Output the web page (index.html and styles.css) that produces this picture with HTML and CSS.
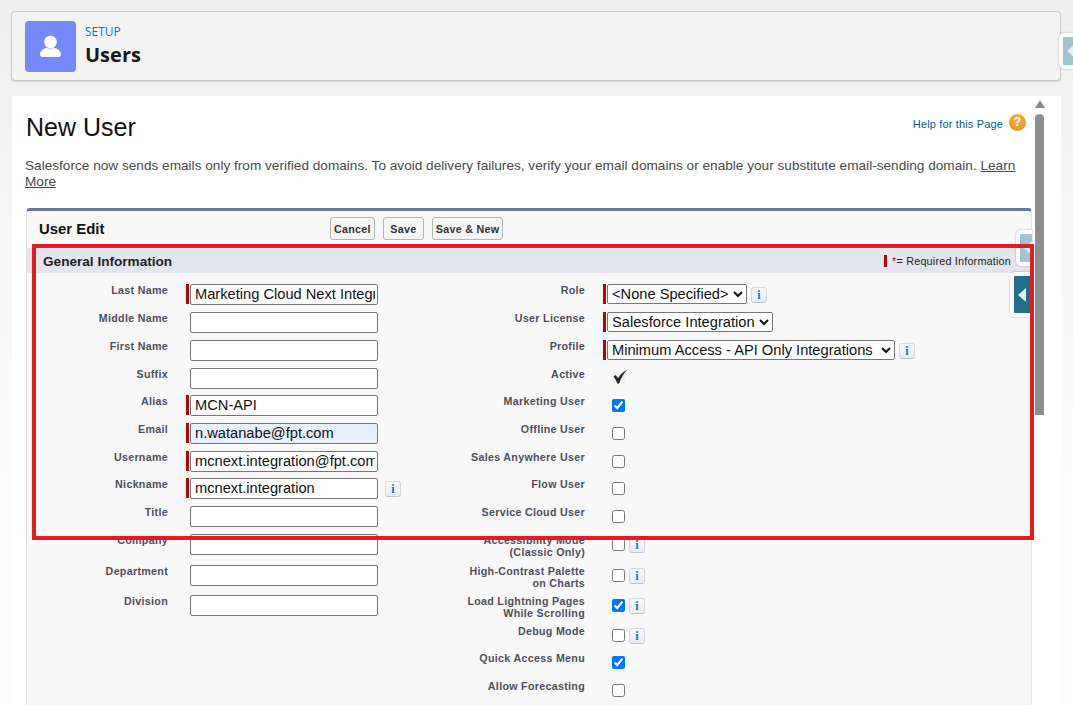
FILE: index.html
```html
<!DOCTYPE html>
<html lang="en">
<head>
  <meta charset="UTF-8">
  <title>Users | New User</title>
  <link rel="stylesheet" href="styles.css">
</head>
<body>
  <div class="page-head">
    <div class="head-icon">
      <svg width="51" height="51" viewBox="0 0 51 51"><circle cx="25.5" cy="21" r="6.3" fill="#fff"/><path d="M15 33.5c0-4 4.500-6.500 7-6.800 1.800 1.200 4.800 1.200 6.800 0 2.700.3 7.200 2.800 7.200 6.800 0 1.600-1 2.500-2.500 2.500h-16c-1.500 0-2.500-.9-2.500-2.500z" fill="#fff"/></svg>
    </div>
    <div>
      <div class="head-kicker">SETUP</div>
      <div class="head-title">Users</div>
    </div>
  </div>

  <div class="content">
    <div class="title-row">
      <h1>New User</h1>
      <div class="help">
        <a href="#">Help for this Page</a>
        <span class="help-icon">?</span>
      </div>
    </div>
    <p class="notice">Salesforce now sends emails only from verified domains. To avoid delivery failures, verify your email domains or enable your substitute email-sending domain. <a href="#">Learn</a> <a href="#">More</a></p>

    <div class="panel">
      <div class="panel-head">
        <div class="panel-title">User Edit</div>
        <div class="buttons">
          <button>Cancel</button>
          <button>Save</button>
          <button>Save &amp; New</button>
        </div>
      </div>
      <div class="section-head">
        <span>General Information</span>
        <span class="required-note"><i class="red-bar"></i><em>*</em>= Required Information</span>
      </div>
      <div class="form">
        <label>Last Name</label>
        <div class="ctl req"><input type="text" value="Marketing Cloud Next Integration"></div>
        <label>Role</label>
        <div class="ctl req"><select><option>&lt;None Specified&gt;</option></select><span class="info">i</span></div>

        <label>Middle Name</label>
        <div class="ctl"><input type="text"></div>
        <label>User License</label>
        <div class="ctl req"><select><option>Salesforce Integration</option></select></div>

        <label>First Name</label>
        <div class="ctl"><input type="text"></div>
        <label>Profile</label>
        <div class="ctl req"><select class="wide"><option>Minimum Access - API Only Integrations</option></select><span class="info">i</span></div>

        <label>Suffix</label>
        <div class="ctl"><input type="text"></div>
        <label>Active</label>
        <div class="ctl"><svg class="tick" width="16" height="15" viewBox="0 0 16 15"><rect x="1" y="2" width="12" height="12" fill="#efefef"/><path d="M1.500 7.500 3.500 6l2.700 3.300C8 6 11 2.800 15.500.5 12 4 9.300 8.500 7 14.500H5.200C4.500 11.500 3 9.500 1.500 7.500z" fill="#222"/></svg></div>

        <label>Alias</label>
        <div class="ctl req"><input type="text" value="MCN-API"></div>
        <label>Marketing User</label>
        <div class="ctl"><input type="checkbox" checked></div>

        <label>Email</label>
        <div class="ctl req"><input class="autofilled" type="text" value="n.watanabe@fpt.com"></div>
        <label>Offline User</label>
        <div class="ctl"><input type="checkbox"></div>

        <label>Username</label>
        <div class="ctl req"><input type="text" value="mcnext.integration@fpt.com"></div>
        <label>Sales Anywhere User</label>
        <div class="ctl"><input type="checkbox"></div>

        <label>Nickname</label>
        <div class="ctl req"><input type="text" value="mcnext.integration"><span class="info">i</span></div>
        <label>Flow User</label>
        <div class="ctl"><input type="checkbox"></div>

        <label>Title</label>
        <div class="ctl"><input type="text"></div>
        <label>Service Cloud User</label>
        <div class="ctl"><input type="checkbox"></div>

        <label>Company</label>
        <div class="ctl"><input type="text"></div>
        <label>Accessibility Mode<br>(Classic Only)</label>
        <div class="ctl"><input type="checkbox"><span class="info">i</span></div>

        <label>Department</label>
        <div class="ctl"><input type="text"></div>
        <label>High-Contrast Palette<br>on Charts</label>
        <div class="ctl"><input type="checkbox"><span class="info">i</span></div>

        <label>Division</label>
        <div class="ctl"><input type="text"></div>
        <label>Load Lightning Pages<br>While Scrolling</label>
        <div class="ctl"><input type="checkbox" checked><span class="info">i</span></div>

        <div></div><div></div>
        <label>Debug Mode</label>
        <div class="ctl"><input type="checkbox"><span class="info">i</span></div>

        <div></div><div></div>
        <label>Quick Access Menu</label>
        <div class="ctl"><input type="checkbox" checked></div>

        <div></div><div></div>
        <label>Allow Forecasting</label>
        <div class="ctl"><input type="checkbox"></div>
      </div>
    </div>
  </div>

  <!-- floating things over the page -->
  <div class="side-tab tab-top"><i></i></div>
  <div class="side-tab tab-faded"><i></i></div>
  <div class="side-tab tab-dark"><i></i></div>
  <div class="scroll-arrow"></div>
  <div class="scroll-thumb"></div>
  <div class="callout"></div>
</body>
</html>
```

FILE: styles.css
```css
body {
  margin: 0;
  height: 705px;
  overflow: hidden;
  background: linear-gradient(#eeeeee, #f6f6f6 200px, #fdfdfd 500px);
  font-family: "Liberation Sans", Arial, sans-serif;
  padding: 11px 12px 0 11px;
  box-sizing: border-box;
}

.page-head {
  display: flex;
  align-items: center;
  gap: 9px;
  height: 70px;
  box-sizing: border-box;
  padding-left: 13px;
  background: #f3f3f3;
  border: 1px solid #c9c9c9;
  border-radius: 4px;
  box-shadow: 0 1px 1px rgba(0,0,0,0.12);
  font-family: "Open Sans", sans-serif;
}

.head-icon {
  width: 51px;
  height: 51px;
  border-radius: 4px;
  background: #7589fb;
}

.head-icon svg {
  display: block;
}

.head-kicker {
  font-size: 12px;
  line-height: 16px;
  color: #0b7ab5;
  margin-bottom: 2px;
}

.head-title {
  font-size: 20px;
  line-height: 26px;
  font-weight: 700;
  color: #181818;
}

.content {
  margin: 15px 0 0 1px;
  height: 620px;
  background: #fff;
  padding: 0 14px;
}

.title-row {
  display: flex;
  justify-content: space-between;
  height: 58px;
}

h1 {
  margin: 17px 0 0;
  font-size: 25px;
  line-height: 28px;
  font-weight: 400;
  color: #111;
}

.help {
  display: flex;
  align-items: center;
  gap: 6px;
  height: 18px;
  margin: 17px 21px 0 0;
}

.help a {
  font-size: 11px;
  line-height: 22px;
  padding-top: 4px;
  letter-spacing: 0.15px;
  color: #015ba7;
  text-decoration: none;
}

.help-icon {
  width: 17px;
  height: 17px;
  border-radius: 50%;
  background: radial-gradient(circle at 50% 35%, #f6b54a, #e08a12);
  color: #fff;
  font-size: 12px;
  font-weight: 700;
  line-height: 17px;
  text-align: center;
}

.notice {
  margin: 4px 0 0 -1px;
  font-size: 13.63px;
  line-height: 16px;
  color: #4a4a4a;
  width: 1000px;
}

.notice a {
  color: #4a4a4a;
}

.panel {
  margin-top: 18px;
  height: 520px;
  width: 1006px;
  box-sizing: border-box;
  background: #f8f8f8;
  border: 1px solid #e2e4e7;
  border-top: 3px solid #6c7896;
  border-radius: 4px 4px 0 0;
}

.panel-head {
  display: flex;
  align-items: center;
  height: 35px;
  padding: 0 0 2px 12px;
  border-bottom: 1px solid #e4e4e4;
}

.panel-title {
  width: 291px;
  font-size: 14.9px;
  font-weight: 700;
  color: #111;
}

.buttons {
  display: flex;
  gap: 8px;
}

.buttons button {
  min-width: 41px;
  height: 23px;
  padding: 0 3px;
  font-family: "Liberation Sans", Arial, sans-serif;
  font-size: 10.7px;
  font-weight: 700;
  letter-spacing: 0.3px;
  color: #333;
  background: #f6f6f6;
  border: 1px solid #b5b5b5;
  border-radius: 3px;
}

.section-head {
  display: flex;
  justify-content: space-between;
  align-items: center;
  height: 24px;
  padding: 0 20px 0 16px;
  background: #e3e6ef;
  font-size: 13.6px;
  font-weight: 700;
  color: #222;
}

.required-note {
  display: flex;
  align-items: center;
  font-size: 10.8px;
  font-weight: 400;
  letter-spacing: 0.2px;
}

.red-bar {
  width: 3px;
  height: 12px;
  margin-right: 5px;
  background: #c00000;
}

.required-note em {
  color: #c00000;
  font-style: normal;
}

.form {
  display: grid;
  grid-template-columns: 141px 272px 145px 1fr;
  grid-template-rows: 28px 28px 28px 27px 28px 28px 27px 28px 28px 31px 30px 30px 27px 28px 28px;
  padding-top: 9px;
}

.form label {
  font-size: 10.7px;
  line-height: 12px;
  padding-top: 2px;
  font-weight: 700;
  letter-spacing: 0.3px;
  color: #4f4f5a;
  text-align: right;
}

.ctl {
  display: flex;
  align-items: center;
  align-self: start;
  height: 20px;
  margin: 2px 0 0 18px;
  border-left: 3px solid transparent;
  padding-left: 1px;
}

.ctl.req {
  border-left-color: #c00000;
}

input[type="text"] {
  width: 188px;
  height: 21px;
  margin-top: 1px;
  flex: none;
  box-sizing: border-box;
  padding: 0 2px 2px 4px;
  font-family: "Liberation Sans", Arial, sans-serif;
  font-size: 14.67px;
  color: #111;
  background: #fff;
  border: 1px solid #767676;
  border-radius: 2px;
}

input.autofilled {
  background: #e8f0fe;
}

select {
  height: 20px;
  padding-right: 1px;
  font-family: "Liberation Sans", Arial, sans-serif;
  font-size: 14.67px;
  color: #111;
  background: #fff;
  border: 1px solid #767676;
  border-radius: 2px;
}

select.wide {
  width: 288px;
}

input[type="checkbox"] {
  width: 13px;
  height: 13px;
  margin: 1px 0 0 5px;
  flex: none;
}

.tick {
  margin: -4px 0 0 5px;
}

.info {
  flex: none;
  width: 16px;
  height: 16px;
  margin: 2px 0 0 4px;
  box-sizing: border-box;
  border: 1px solid #d3d9df;
  border-bottom-color: #bcc3ca;
  border-radius: 3px;
  background: linear-gradient(#f5f8fb, #e6edf5);
  font-family: "Liberation Serif", serif;
  font-size: 12px;
  font-weight: 700;
  line-height: 14px;
  text-align: center;
  color: #2272b8;
}

input[type="text"] + .info {
  margin-left: 7px;
}

.side-tab {
  position: absolute;
  box-sizing: border-box;
  border: 4px solid #fff;
  border-right: 0;
  border-radius: 5px 0 0 5px;
  box-shadow: 0 0 2px rgba(0,0,0,0.35);
  display: flex;
  align-items: center;
}

.side-tab i {
  width: 0;
  height: 0;
  margin-left: 4px;
  border: 7px solid transparent;
  border-left: 0;
  border-right: 8px solid #e8eef2;
}

.tab-top {
  left: 1059px;
  top: 33px;
  width: 14px;
  height: 36px;
  background: #a4c3d2;
}

.tab-faded {
  left: 1016px;
  top: 230px;
  width: 16px;
  height: 36px;
  background: #a4c3d2;
}

.tab-dark {
  left: 1010px;
  top: 272px;
  width: 21px;
  height: 45px;
  background: #1f6f8b;
}

.scroll-arrow {
  position: absolute;
  left: 1035px;
  top: 100px;
  width: 0;
  height: 0;
  border: 5px solid transparent;
  border-top: 0;
  border-bottom: 8px solid #8a8a8a;
}

.scroll-thumb {
  position: absolute;
  left: 1035px;
  top: 114px;
  width: 9px;
  height: 301px;
  border-radius: 5px 5px 0 0;
  background: #8e8e8e;
}

.callout {
  position: absolute;
  left: 32px;
  top: 244px;
  width: 1002px;
  height: 296px;
  box-sizing: border-box;
  border: 4px solid #e31b23;
}
```
